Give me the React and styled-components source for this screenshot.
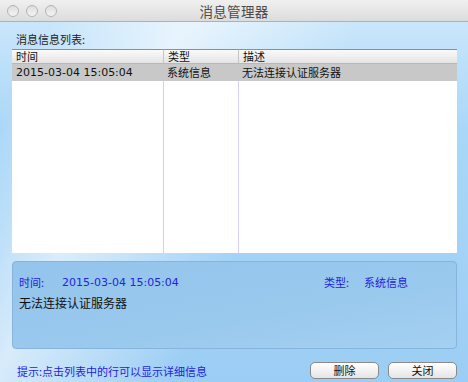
import React from "react";
import styled, { createGlobalStyle } from "styled-components";

const Global = createGlobalStyle`
  html, body { margin: 0; padding: 0; }
  body { font-family: "Noto Sans CJK SC", "Noto Sans", sans-serif; }
`;

const CJK = `"Noto Sans CJK SC", "Noto Sans", sans-serif`;
const NUM = `"DejaVu Sans", "Noto Sans CJK SC", sans-serif`;

const Window = styled.div`
  width: 468px;
  height: 382px;
  display: flex;
  flex-direction: column;
  overflow: hidden;
`;

const TitleBar = styled.div`
  height: 21px;
  flex: none;
  display: grid;
  grid-template-columns: 1fr auto 1fr;
  align-items: center;
  background: linear-gradient(#f0f0f0, #dcdcdc);
  border-bottom: 1px solid #b0b0b0;
`;

const Lights = styled.div`
  display: flex;
  gap: 7px;
  padding-left: 7px;
`;

const Light = styled.span`
  width: 10px;
  height: 10px;
  border-radius: 50%;
  border: 1px solid #b4b4b4;
  background: linear-gradient(#dedede, #f4f4f4);
`;

const Title = styled.div`
  font-family: ${CJK};
  font-size: 13.5px;
  color: #4a4a4a;
  letter-spacing: 0.3px;
`;

const Body = styled.div`
  flex: 1;
  display: flex;
  flex-direction: column;
  padding: 0 11px 0 12px;
  background:
    linear-gradient(118deg, rgba(255,255,255,0) 8%, rgba(255,255,255,0.6) 28%, rgba(255,255,255,0) 55%),
    linear-gradient(180deg, #c9e6fb 0%, #a9d7f8 30%, #9ccdf4 100%);
`;

const Label = styled.div`
  font-family: ${CJK};
  font-size: 11px;
  line-height: 16px;
  color: #222;
  padding: 9px 0 2px 4px;
`;

const Table = styled.div`
  height: 204px;
  background: #fff;
  display: grid;
  grid-template-columns: 151px 75px 1fr;
  grid-template-rows: 15px 17px 1fr;
`;

const HeadCell = styled.div`
  font-family: ${CJK};
  font-size: 11px;
  line-height: 15px;
  color: #111;
  padding-left: ${(p) => p.$pad}px;
  background: linear-gradient(#fafafa, #e4e4e4);
  border-top: 1px solid #8e8e8e;
  border-bottom: 1px solid #b8b8b8;
  border-left: ${(p) => (p.$first ? "none" : "1px solid #c4c4c4")};
  box-sizing: border-box;
  display: flex;
  align-items: center;
`;

const Cell = styled.div`
  font-family: ${(p) => (p.$num ? NUM : CJK)};
  font-size: ${(p) => (p.$num ? "11px" : "11px")};
  line-height: 17px;
  color: #111;
  background: #c8c8c8;
  padding-left: ${(p) => p.$pad}px;
  white-space: nowrap;
`;

const Col = styled.div`
  border-left: ${(p) => (p.$first ? "none" : "1px solid #d4d0f4")};
`;

const Panel = styled.div`
  margin-top: 8px;
  height: 88px;
  box-sizing: border-box;
  border: 1px solid #86b4dc;
  border-radius: 4px;
  background: linear-gradient(170deg, #94c4ec 0%, #9ac9ee 60%, #a4d0f1 100%);
  padding: 12px 6px 0 6px;
  display: flex;
  flex-direction: column;
  gap: 5px;
`;

const InfoRow = styled.div`
  display: flex;
  align-items: center;
  height: 16px;
`;

const Blue = styled.span`
  font-family: ${(p) => (p.$num ? NUM : CJK)};
  font-size: 11px;
  color: #2323e0;
  width: ${(p) => (p.$w ? p.$w + "px" : "auto")};
  margin-left: ${(p) => p.$ml || 0}px;
  flex: none;
  white-space: nowrap;
`;

const Message = styled.div`
  font-family: ${CJK};
  font-size: 12px;
  line-height: 16px;
  color: #111;
`;

const Footer = styled.div`
  flex: 1;
  display: flex;
  align-items: center;
  justify-content: space-between;
  padding: 10px 0 0 5px;
`;

const Hint = styled.div`
  font-family: ${CJK};
  font-size: 11px;
  color: #2323e0;
`;

const Buttons = styled.div`
  display: flex;
  gap: 9px;
`;

const Button = styled.button`
  width: 69px;
  height: 17px;
  box-sizing: border-box;
  border: 1px solid #8a8a8a;
  border-radius: 5px;
  background: linear-gradient(#ffffff, #f2f2f2 50%, #e4e4e4);
  font-family: ${CJK};
  font-size: 11px;
  color: #111;
  padding: 0;
  line-height: 15px;
`;

export default function App() {
  return (
    <>
      <Global />
      <Window>
        <TitleBar>
          <Lights>
            <Light />
            <Light />
            <Light />
          </Lights>
          <Title>消息管理器</Title>
          <div />
        </TitleBar>
        <Body>
          <Label>消息信息列表:</Label>
          <Table>
            <HeadCell $first $pad={4}>时间</HeadCell>
            <HeadCell $pad={4}>类型</HeadCell>
            <HeadCell $pad={4}>描述</HeadCell>
            <Cell $num $pad={4}>2015-03-04 15:05:04</Cell>
            <Cell $pad={4}>系统信息</Cell>
            <Cell $pad={4}>无法连接认证服务器</Cell>
            <Col $first />
            <Col />
            <Col />
          </Table>
          <Panel>
            <InfoRow>
              <Blue $w={43}>时间:</Blue>
              <Blue $num $w={121}>2015-03-04 15:05:04</Blue>
              <Blue $ml={141} $w={40}>类型:</Blue>
              <Blue>系统信息</Blue>
            </InfoRow>
            <Message>无法连接认证服务器</Message>
          </Panel>
          <Footer>
            <Hint>提示:点击列表中的行可以显示详细信息</Hint>
            <Buttons>
              <Button>删除</Button>
              <Button>关闭</Button>
            </Buttons>
          </Footer>
        </Body>
      </Window>
    </>
  );
}
